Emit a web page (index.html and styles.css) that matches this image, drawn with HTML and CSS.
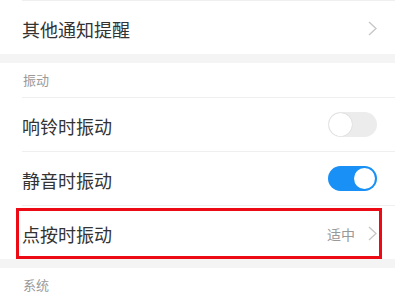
FILE: index.html
```html
<!DOCTYPE html>
<html lang="zh-CN">

<head>
    <meta charset="UTF-8">
    <meta name="viewport" content="width=device-width, initial-scale=1.0">
    <title>振动设置</title>
    <link rel="stylesheet" href="styles.css">
</head>

<body>
    <div class="page">
        <div class="divider"></div>
        <div class="row">
            <span class="label">其他通知提醒</span>
            <svg class="chevron" viewBox="0 0 9 15"><polyline points="1,1 8,7.5 1,14" /></svg>
        </div>

        <div class="gap"></div>
        <div class="group-title">振动</div>
        <div class="divider"></div>

        <div class="row">
            <span class="label">响铃时振动</span>
            <span class="switch"></span>
        </div>
        <div class="divider"></div>
        <div class="row">
            <span class="label">静音时振动</span>
            <span class="switch on"></span>
        </div>
        <div class="divider"></div>
        <div class="row marked">
            <span class="label">点按时振动</span>
            <span class="value">适中</span>
            <svg class="chevron" viewBox="0 0 9 15"><polyline points="1,1 8,7.5 1,14" /></svg>
        </div>

        <div class="gap"></div>
        <div class="group-title">系统</div>
    </div>
</body>

</html>
```

FILE: styles.css
```css
* {
    margin: 0;
    padding: 0;
    box-sizing: border-box;
}

body {
    background: #fff;
    font-family: "Noto Sans CJK SC", "Noto Sans", sans-serif;
    color: #333;
}

.page {
    width: 395px;
}

.divider {
    height: 1px;
    margin-left: 22px;
    background: #efefef;
}

.gap {
    height: 9px;
    background: #f4f4f4;
}

.group-title {
    height: 34px;
    line-height: 34px;
    padding-left: 23px;
    font-size: 13px;
    color: #9a9a9a;
}

.row {
    position: relative;
    height: 53px;
    display: flex;
    align-items: center;
    padding: 0 18px 0 22px;
}

.label {
    flex: 1;
    font-size: 18px;
    color: #333;
    padding-top: 3px;
}

.value {
    font-size: 14px;
    color: #999;
    margin-right: 13px;
    padding-top: 2px;
}

.chevron {
    width: 9px;
    height: 15px;
    fill: none;
    stroke: #c6c6c6;
    stroke-width: 1.3;
    margin-top: 2px;
}

.switch {
    position: relative;
    width: 49px;
    height: 25px;
    border-radius: 13px;
    background: #ececec;
}

.switch::after {
    content: "";
    position: absolute;
    left: 1px;
    top: 1px;
    width: 23px;
    height: 23px;
    border-radius: 50%;
    background: #fff;
    box-shadow: 0 0 1px rgba(0, 0, 0, 0.25);
}

.switch.on {
    background: #1890f5;
}

.switch.on::after {
    left: auto;
    right: 2px;
    top: 2px;
    width: 21px;
    height: 21px;
    box-shadow: none;
}

.marked::after {
    content: "";
    position: absolute;
    left: 16px;
    right: 13px;
    top: 2px;
    bottom: 0;
    border: 3px solid #ec0a14;
}
```
